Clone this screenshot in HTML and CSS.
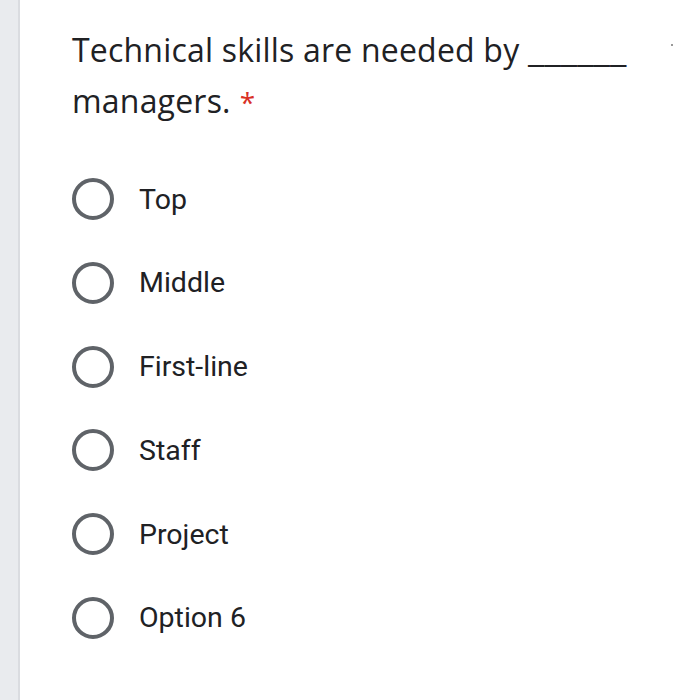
FILE: index.html
```html
<!DOCTYPE html>
<html>
<head>
<meta charset="utf-8">
<link rel="stylesheet" href="styles.css">
</head>
<body>
<div class="page">
  <div class="rail"></div>
  <div class="card">
    <div class="title">Technical skills are needed by <span class="blank">______</span> managers.<span class="req">*</span></div>
    <div class="options">
      <div class="opt"><span class="radio"></span><span class="label">Top</span></div>
      <div class="opt"><span class="radio"></span><span class="label">Middle</span></div>
      <div class="opt"><span class="radio"></span><span class="label">First-line</span></div>
      <div class="opt"><span class="radio"></span><span class="label">Staff</span></div>
      <div class="opt"><span class="radio"></span><span class="label">Project</span></div>
      <div class="opt"><span class="radio"></span><span class="label">Option 6</span></div>
    </div>
  </div>
  <span class="dot"></span>
</div>
</body>
</html>
```
FILE: styles.css
```css
html, body { margin: 0; padding: 0; background: #fff; }
.page {
  display: flex;
  width: 673px;
  height: 700px;
  position: relative;
  overflow: hidden;
}
.rail {
  width: 18px;
  flex: none;
  background: #e9ebee;
  border-right: 2px solid #dadce0;
}
.card {
  flex: 1;
  padding: 24px 0 0 52px;
}
.title {
  font-family: "Open Sans", sans-serif;
  font-size: 32px;
  line-height: 51px;
  color: #202124;
  width: 580px;
  letter-spacing: 0.2px;
}
.blank {
  display: inline-block;
  letter-spacing: 0;
  transform: scaleX(1.17);
  transform-origin: left center;
}
.req { color: #d93025; font-size: 28px; margin-left: 9px; }
.options {
  margin-top: 51px;
  display: flex;
  flex-direction: column;
  gap: 43.8px;
}
.opt {
  display: flex;
  align-items: center;
  gap: 25px;
  height: 40px;
}
.radio {
  width: 34px;
  height: 34px;
  border: 4px solid #5f6368;
  border-radius: 50%;
  flex: none;
}
.label {
  font-family: Roboto, sans-serif;
  font-size: 28.5px;
  color: #202124;
}
.dot {
  position: absolute;
  left: 671px;
  top: 44px;
  width: 2px;
  height: 2px;
  background: #999;
}
```
